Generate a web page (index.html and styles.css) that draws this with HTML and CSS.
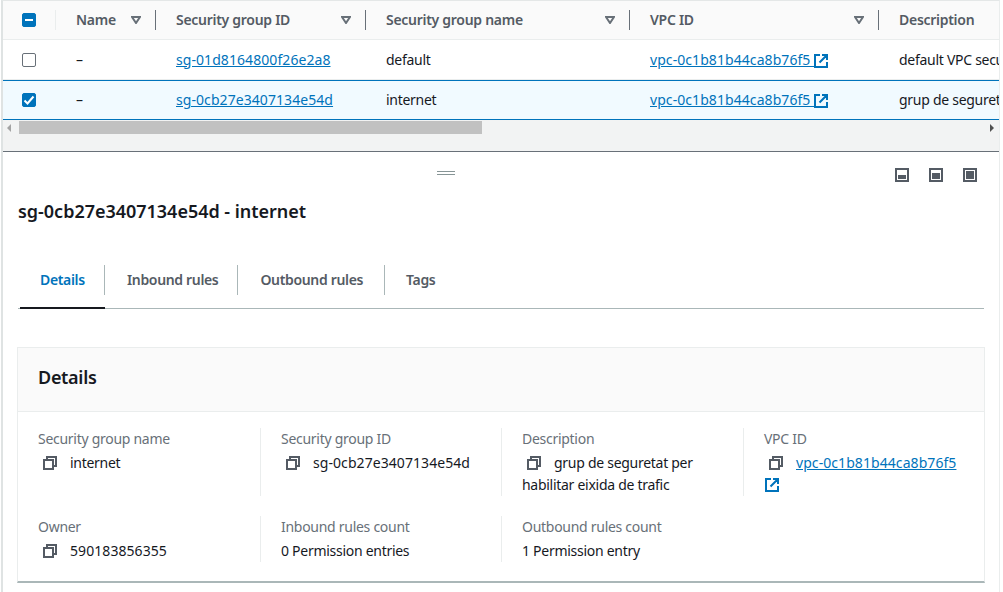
FILE: index.html
```html
<html>
<head>
	<link rel="stylesheet" href="styles.css">
	<title>Security groups</title>
</head>
<body>
	<svg class="defs" width="0" height="0">
		<symbol id="copy" viewBox="0 0 14 14"><path d="M4 4V1h9v9h-3M1 4h9v9H1z" fill="none" stroke="currentColor" stroke-width="2"/></symbol>
		<symbol id="ext" viewBox="0 0 14 14"><path d="M6 1H1v12h12V8M5.5 8.5 12 2M8 1h5v5" fill="none" stroke="currentColor" stroke-width="2"/></symbol>
		<symbol id="sort" viewBox="0 0 10 8"><path d="M1 1h8L5 7z" fill="none" stroke="currentColor" stroke-width="2"/></symbol>
	</svg>

	<div class="page">
		<div class="tablewrap">
			<div class="row head">
				<div class="cell c0"><span class="check on"><span class="dash"></span></span></div>
				<div class="cell c1 first">Name<svg class="sort"><use href="#sort"/></svg></div>
				<div class="cell c2">Security group ID<svg class="sort"><use href="#sort"/></svg></div>
				<div class="cell c3">Security group name<svg class="sort"><use href="#sort"/></svg></div>
				<div class="cell c4">VPC ID<svg class="sort"><use href="#sort"/></svg></div>
				<div class="cell c5">Description</div>
			</div>
			<div class="row">
				<div class="cell c0"><span class="check"></span></div>
				<div class="cell c1">–</div>
				<div class="cell c2"><a class="id" href="#">sg-01d8164800f26e2a8</a></div>
				<div class="cell c3">default</div>
				<div class="cell c4"><a class="id" href="#">vpc-0c1b81b44ca8b76f5 </a><svg class="ext"><use href="#ext"/></svg></div>
				<div class="cell c5">default VPC security group</div>
			</div>
			<div class="row selected">
				<div class="cell c0"><span class="check on"><svg viewBox="0 0 14 14" width="14" height="14"><path d="M2.5 7.5 5.5 10.5 11.5 3.5" fill="none" stroke="#fff" stroke-width="2"/></svg></span></div>
				<div class="cell c1">–</div>
				<div class="cell c2"><a class="id" href="#">sg-0cb27e3407134e54d</a></div>
				<div class="cell c3">internet</div>
				<div class="cell c4"><a class="id" href="#">vpc-0c1b81b44ca8b76f5 </a><svg class="ext"><use href="#ext"/></svg></div>
				<div class="cell c5">grup de seguretat per habilitar eixida de trafic</div>
			</div>
			<div class="scrollbar">
				<span class="arrow left"></span>
				<span class="thumb"></span>
				<span class="arrow right"></span>
			</div>
		</div>

		<div class="split">
			<div class="handle"></div>
			<div class="panelbtns">
				<svg viewBox="0 0 14 14"><rect x="1" y="1" width="12" height="12" fill="none" stroke="currentColor" stroke-width="2"/><rect x="3" y="7" width="8" height="4" fill="currentColor"/></svg>
				<svg viewBox="0 0 14 14"><rect x="1" y="1" width="12" height="12" fill="none" stroke="currentColor" stroke-width="2"/><rect x="3" y="5" width="8" height="6" fill="currentColor"/></svg>
				<svg viewBox="0 0 14 14"><rect x="1" y="1" width="12" height="12" fill="none" stroke="currentColor" stroke-width="2"/><rect x="3" y="3" width="8" height="8" fill="currentColor"/></svg>
			</div>
			<h2 class="title">sg-0cb27e3407134e54d - internet</h2>

			<div class="tabs">
				<div class="tab active"><span>Details</span></div>
				<div class="tab"><span>Inbound rules</span></div>
				<div class="tab"><span>Outbound rules</span></div>
				<div class="tab"><span>Tags</span></div>
			</div>

			<div class="card">
				<div class="cardhead">Details</div>
				<div class="cardbody">
					<div class="field">
						<div class="label">Security group name</div>
						<div class="value"><svg class="copy"><use href="#copy"/></svg>internet</div>
					</div>
					<div class="field">
						<div class="label">Security group ID</div>
						<div class="value"><svg class="copy"><use href="#copy"/></svg><span class="id">sg-0cb27e3407134e54d</span></div>
					</div>
					<div class="field">
						<div class="label">Description</div>
						<div class="value"><svg class="copy"><use href="#copy"/></svg>grup de seguretat per habilitar eixida de trafic</div>
					</div>
					<div class="field">
						<div class="label">VPC ID</div>
						<div class="value"><svg class="copy"><use href="#copy"/></svg><a class="id" href="#">vpc-0c1b81b44ca8b76f5</a><svg class="ext"><use href="#ext"/></svg></div>
					</div>
					<div class="field short">
						<div class="label">Owner</div>
						<div class="value"><svg class="copy"><use href="#copy"/></svg><span class="id">590183856355</span></div>
					</div>
					<div class="field short">
						<div class="label">Inbound rules count</div>
						<div class="value">0 Permission entries</div>
					</div>
					<div class="field short">
						<div class="label">Outbound rules count</div>
						<div class="value">1 Permission entry</div>
					</div>
				</div>
			</div>
		</div>
	</div>
</body>
</html>
```

FILE: styles.css
```css
html,body{
	margin: 0;
	height: 592px;
	overflow: hidden;
	background-color: #fff;
	font-family: 'Noto Sans', sans-serif;
	font-size: 14px;
	color: #16191f;
}
a{
	color: #0073bb;
	text-decoration: underline;
}
.id{
	letter-spacing: 0.07px;
}
.defs{
	display: block;
	height: 0;
}
.page{
	margin-left: 1px;
	width: 999px;
	border-left: 2px solid #dfe3e3;
	border-right: 1px solid #eaeded;
	border-top: 1px solid #e4e7e7;
	box-sizing: border-box;
	height: 592px;
	letter-spacing: -0.28px;
}
.tablewrap{
	background-color: #f2f3f3;
	height: 151px;
	border-bottom: 1px solid #687078;
	box-sizing: border-box;
	overflow: hidden;
}
.row{
	display: flex;
	height: 40px;
	align-items: center;
	background-color: #fff;
	box-sizing: border-box;
	border-bottom: 1px solid #eaeded;
	white-space: nowrap;
	overflow: hidden;
}
.row.head{
	height: 39px;
	background-color: #fafafa;
	color: #545b64;
	font-weight: 600;
}
.row.selected{
	background-color: #f1faff;
	border-top: 1px solid #0073bb;
	border-bottom: 1px solid #0073bb;
}
.cell{
	position: relative;
	flex: none;
	box-sizing: border-box;
	height: 20px;
	line-height: 20px;
	padding-left: 21px;
}
.head .cell + .cell::before{
	content: "";
	position: absolute;
	left: 0;
	top: 0;
	height: 20px;
	width: 1px;
	background-color: #687078;
}
.head .cell.first::before{
	background-color: #eaeded;
}
.c0{ width: 52px; padding-left: 19px; }
.c1{ width: 100px; }
.c2{ width: 210px; }
.c3{ width: 264px; }
.c4{ width: 249px; }
.c5{ width: 300px; }
.sort{
	position: absolute;
	right: 14px;
	top: 6px;
	width: 10px;
	height: 8px;
	color: #687078;
}
.check{
	display: block;
	box-sizing: border-box;
	width: 14px;
	height: 14px;
	border: 1px solid #687078;
	border-radius: 2px;
	background-color: #fff;
	margin-top: 3px;
}
.check.on{
	background-color: #0073bb;
	border-color: #0073bb;
}
.check.on svg{
	display: block;
	margin: -1px;
}
.dash{
	display: block;
	width: 8px;
	height: 2px;
	margin: 5px 2px 0;
	background-color: #fff;
}
.ext{
	width: 14px;
	height: 14px;
	color: #0073bb;
	vertical-align: -3px;
}
.scrollbar{
	display: flex;
	align-items: center;
	height: 15px;
}
.thumb{
	display: block;
	width: 463px;
	height: 13px;
	margin-left: 8px;
	background-color: #c1c1c1;
}
.arrow{
	display: block;
	width: 0;
	height: 0;
	border-top: 4px solid transparent;
	border-bottom: 4px solid transparent;
}
.arrow.left{
	margin-left: 4px;
	border-right: 4px solid #a3a3a3;
}
.arrow.right{
	margin-left: auto;
	margin-right: 5px;
	border-left: 4px solid #505050;
}
.split{
	position: relative;
	padding: 0 14px;
	height: 440px;
}
.handle{
	position: absolute;
	left: 434px;
	top: 19px;
	width: 18px;
	height: 2px;
	border-top: 1px solid #879596;
	border-bottom: 1px solid #879596;
}
.panelbtns{
	position: absolute;
	right: 22px;
	top: 16px;
	display: flex;
	gap: 20px;
	color: #545b64;
}
.panelbtns svg{
	display: block;
	width: 14px;
	height: 14px;
}
.title{
	margin: 0;
	padding: 48px 0 0 1px;
	font-size: 18px;
	line-height: 22px;
	font-weight: 600;
	letter-spacing: -0.02px;
}
.tabs{
	display: flex;
	margin: 43px 0 0 1px;
	width: 966px;
	height: 44px;
	box-sizing: border-box;
	border-bottom: 1px solid #aab7b8;
	font-weight: 600;
	color: #545b64;
	letter-spacing: -0.34px;
}
.tab span{
	display: block;
	height: 30px;
	line-height: 30px;
	padding: 0 20px 0 22px;
	border-right: 1px solid #aab7b8;
}
.tab:nth-child(2) span{
	padding-right: 19px;
}
.tab:nth-child(3) span{
	padding-right: 21px;
}
.tab:last-child span{
	padding-left: 21px;
	border-right: 0;
}
.tab.active{
	color: #0073bb;
	margin-left: 2px;
	height: 44px;
	border-bottom: 2px solid #16191f;
	box-sizing: border-box;
}
.tab.active span{
	padding: 0 19px 0 20px;
	width: 45px;
	box-sizing: content-box;
}
.card{
	margin-top: 38px;
	width: 968px;
	height: 236px;
	box-sizing: border-box;
	border: 1px solid #eaeded;
	border-bottom: 2px solid #aab7b8;
}
.cardhead{
	height: 64px;
	line-height: 58px;
	box-sizing: border-box;
	padding-left: 20px;
	background-color: #fafafa;
	border-bottom: 1px solid #eaeded;
	font-size: 18px;
	font-weight: 600;
	letter-spacing: -0.3px;
}
.cardbody{
	display: grid;
	grid-template-columns: 242px 241px 242px 240px;
	grid-template-rows: 68px 46px;
	row-gap: 20px;
	padding-top: 16px;
}
.field{
	box-sizing: border-box;
	padding: 0 20px;
	border-left: 1px solid #eaeded;
	line-height: 22px;
}
.field:first-child,.field:nth-child(5){
	border-left: 0;
}
.label{
	color: #687078;
}
.value{
	margin-top: 2px;
}
.value .ext{
	display: block;
	margin: 4px 0 0 1px;
}
.copy{
	width: 14px;
	height: 14px;
	margin: 0 13px 0 5px;
	color: #545b64;
	vertical-align: -2px;
}
```
